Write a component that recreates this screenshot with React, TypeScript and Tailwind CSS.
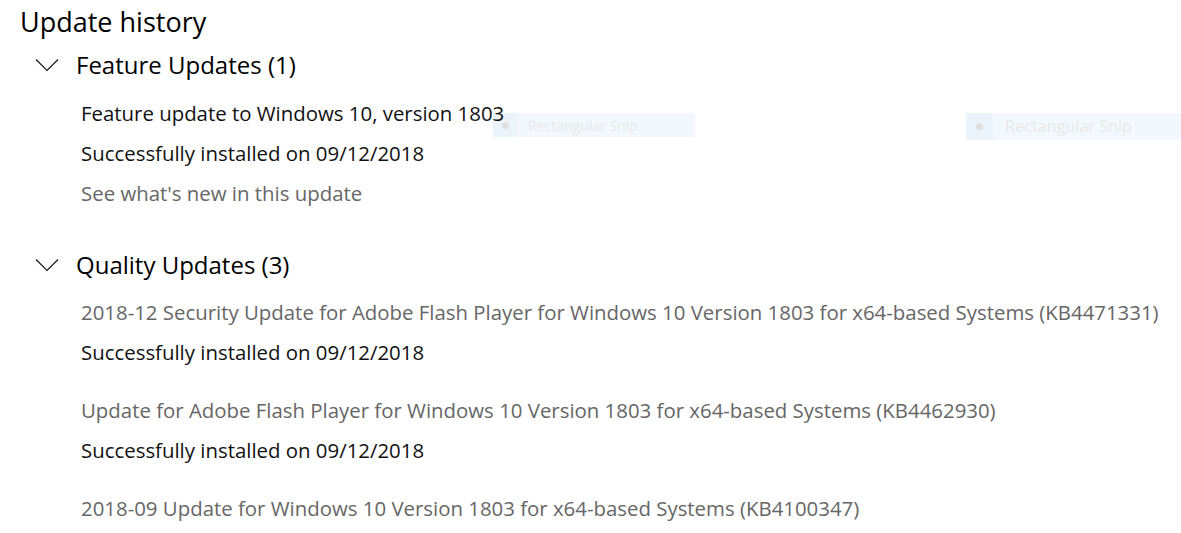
import React from "react";

function Chevron() {
  return (
    <svg width="24" height="14" viewBox="0 0 24 14" className="shrink-0">
      <polyline points="1,1.5 12,12.5 23,1.5" fill="none" stroke="#1a1a1a" strokeWidth="1.2" />
    </svg>
  );
}

function SectionHeader({ title }: { title: string }) {
  return (
    <div className="flex h-[42px] items-center pl-[35px] text-[24px] text-black">
      <Chevron />
      <span className="ml-[17px] leading-none">{title}</span>
    </div>
  );
}

function Line({ text, tone, className = "" }: { text: string; tone: "dark" | "grey"; className?: string }) {
  return (
    <div
      className={
        "flex h-[40px] items-center pl-[81px] text-[20.4px] whitespace-nowrap " +
        (tone === "dark" ? "text-[#111111] " : "text-[#666666] ") +
        className
      }
    >
      {text}
    </div>
  );
}

function Snip({ small }: { small: boolean }) {
  return (
    <div
      className={
        "flex items-stretch bg-[#f2f8fd] " +
        (small ? "h-[24px] w-[202px]" : "h-[27px] w-[215px]")
      }
    >
      <div
        className={
          "flex items-center justify-center bg-[#ebf3fb] " + (small ? "w-[24px]" : "w-[27px]")
        }
      >
        <div className="h-[7px] w-[7px] rounded-full bg-[#e0e0e0]" />
      </div>
      <div
        className={
          "flex items-center text-[#e8e8e8] " +
          (small ? "pl-[11px] text-[14px]" : "pl-[12px] text-[16.2px]")
        }
      >
        Rectangular Snip
      </div>
    </div>
  );
}

export default function App() {
  return (
    <div
      className="relative h-[533px] w-[1181px] overflow-hidden bg-white"
      style={{ fontFamily: '"Open Sans", "Noto Sans", sans-serif' }}
    >
      <div className="absolute left-[493px] top-[113px] z-0">
        <Snip small />
      </div>
      <div className="absolute left-[966px] top-[113px] z-0">
        <Snip small={false} />
      </div>

      <div className="relative z-10">
        <div className="flex h-[44px] items-center pl-[20px] text-[27px] text-black">Update history</div>
        <SectionHeader title="Feature Updates (1)" />
        <div className="mt-[7px]">
          <Line text="Feature update to Windows 10, version 1803" tone="dark" />
          <Line text="Successfully installed on 09/12/2018" tone="dark" />
          <Line text="See what's new in this update" tone="grey" />
        </div>
        <div className="mt-[31px]">
          <SectionHeader title="Quality Updates (3)" />
        </div>
        <div className="mt-[6px]">
          <Line
            text="2018-12 Security Update for Adobe Flash Player for Windows 10 Version 1803 for x64-based Systems (KB4471331)"
            tone="grey"
          />
          <Line text="Successfully installed on 09/12/2018" tone="dark" />
          <Line
            text="Update for Adobe Flash Player for Windows 10 Version 1803 for x64-based Systems (KB4462930)"
            tone="grey"
            className="mt-[18px]"
          />
          <Line text="Successfully installed on 09/12/2018" tone="dark" />
          <Line
            text="2018-09 Update for Windows 10 Version 1803 for x64-based Systems (KB4100347)"
            tone="grey"
            className="mt-[18px]"
          />
        </div>
      </div>
    </div>
  );
}
